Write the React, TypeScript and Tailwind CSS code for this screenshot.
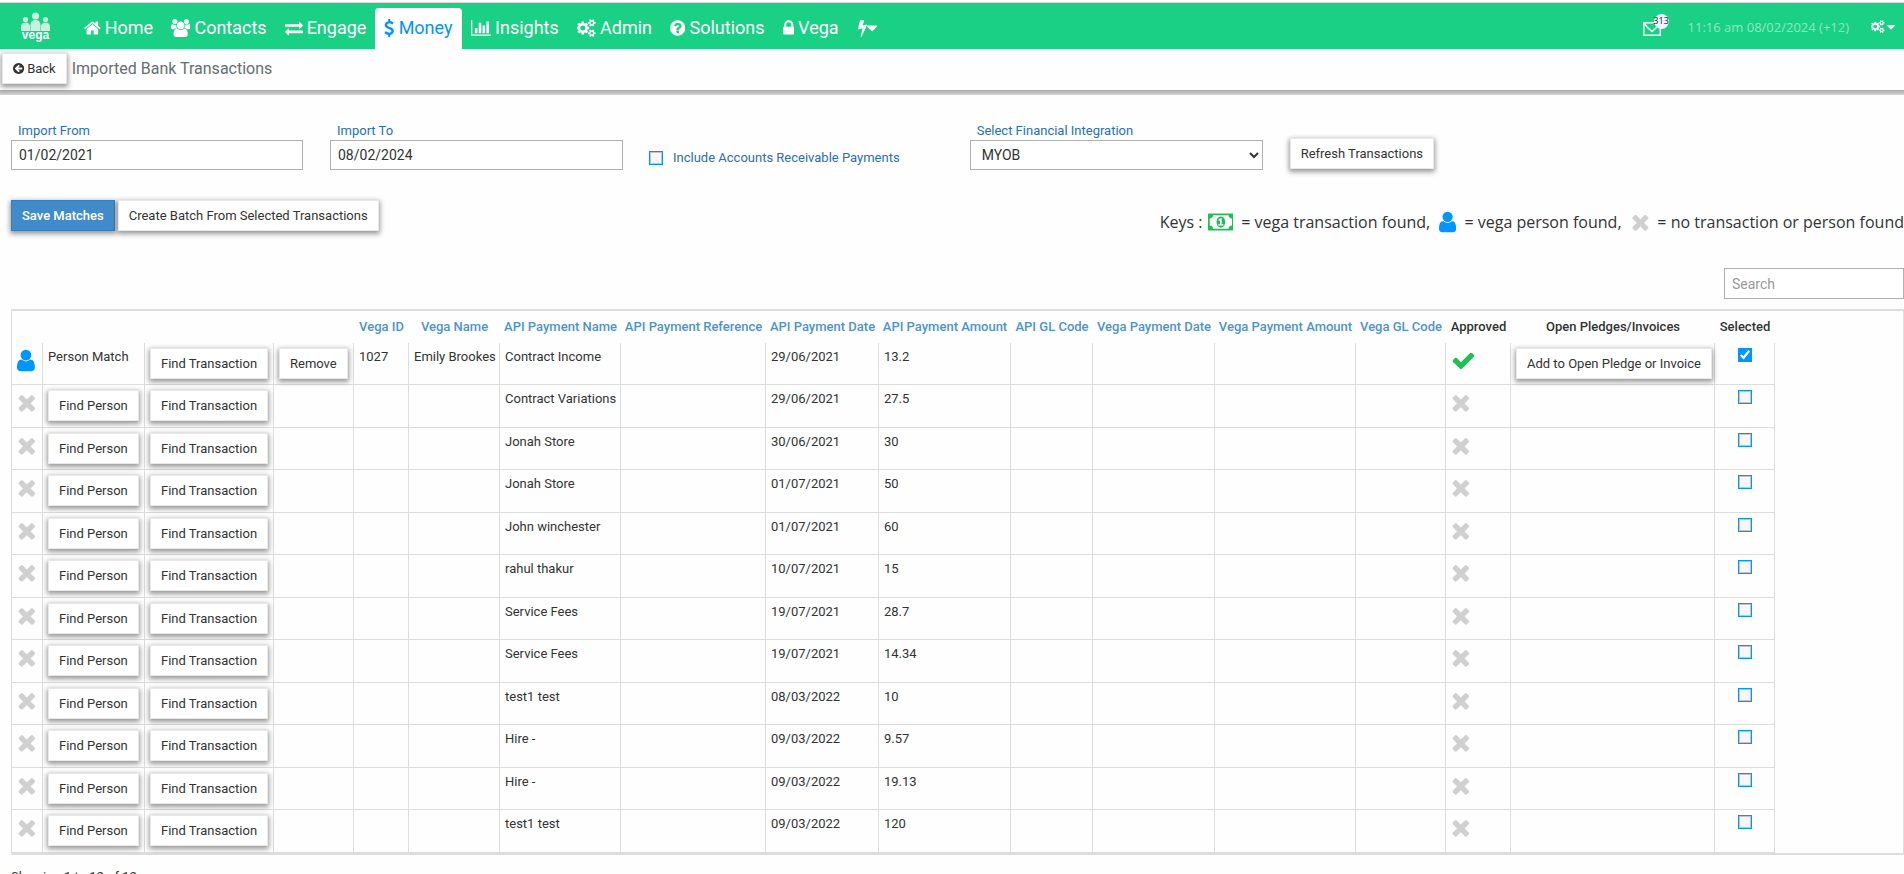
import { useState } from "react";
import type { ReactNode } from "react";

type IconDef = { box: string; d: string };

const icons: Record<string, IconDef> = {
  home: {
    box: "64 0 1664 1792",
    d: "M1472 992v480q0 26-19 45t-45 19h-384v-384h-256v384h-384q-26 0-45-19t-19-45v-480q0-1 .5-3t.5-3l575-474 575 474q1 2 1 6zm223-69l-62 74q-8 9-21 11h-3q-13 0-21-7l-692-577-692 577q-12 8-24 7-13-2-21-11l-62-74q-8-10-7-23.5t11-21.5l719-599q32-26 76-26t76 26l244 204v-195q0-14 9-23t23-9h192q14 0 23 9t9 23v408l219 182q10 8 11 21.5t-7 23.5z",
  },
  users: {
    box: "0 0 1920 1792",
    d: "M593 896q-162 5-265 128h-134q-82 0-138-40.5t-56-118.5q0-353 124-353 6 0 43.5 21t97.5 42.5 119 21.5q67 0 133-23-5 37-5 66 0 159 93 290zm1071 637q0 120-73 189.5t-194 69.5h-874q-121 0-194-69.5t-73-189.5q0-53 3.5-103.5t14-109 26.5-108.5 43-97.5 62-81 85.5-53.5 111.5-20q10 0 43 21.5t73 48 107 48 135 21.5 135-21.5 107-48 73-48 43-21.5q61 0 111.5 20t85.5 53.5 62 81 43 97.5 26.5 108.5 14 109 3.5 103.5zm-1024-1277q0 106-75 181t-181 75-181-75-75-181 75-181 181-75 181 75 75 181zm704 384q0 159-112.5 271.5t-271.5 112.5-271.5-112.5-112.5-271.5 112.5-271.5 271.5-112.5 271.5 112.5 112.5 271.5zm576 225q0 78-56 118.5t-138 40.5h-134q-103-123-265-128 93-131 93-290 0-29-5-66 66 23 133 23 59 0 119-21.5t97.5-42.5 43.5-21q124 0 124 353zm-128-609q0 106-75 181t-181 75-181-75-75-181 75-181 181-75 181 75 75 181z",
  },
  exchange: {
    box: "0 0 1792 1792",
    d: "M1792 1184v192q0 13-9.5 22.5t-22.5 9.5h-1376v192q0 13-9.5 22.5t-22.5 9.5q-12 0-24-10l-319-320q-9-9-9-22 0-14 9-23l320-320q9-9 23-9 13 0 22.5 9.5t9.5 22.5v192h1376q13 0 22.5 9.5t9.5 22.5zm0-544q0 14-9 23l-320 320q-9 9-23 9-13 0-22.5-9.5t-9.5-22.5v-192h-1376q-13 0-22.5-9.5t-9.5-22.5v-192q0-13 9.5-22.5t22.5-9.5h1376v-192q0-14 9-23t23-9q12 0 24 10l319 319q9 9 9 23z",
  },
  dollar: {
    box: "384 0 1024 1792",
    d: "M1362 1185q0 153-99.5 263.5t-258.5 136.5v175q0 14-9 23t-23 9h-135q-13 0-22.5-9.5t-9.5-22.5v-175q-66-9-127.5-31t-101.5-44.5-74-48-46.5-37.5-17.5-18q-17-21-2-41l103-135q7-10 23-12 15-2 24 9l2 2q113 99 243 125 37 8 74 8 81 0 142.5-43t61.5-122q0-28-15-53t-33.5-42-58.5-37.5-66-32-80-32.5q-39-16-61.5-25t-61.5-26.5-62.5-31-56.5-35.5-53.5-42.5-43.5-49-35.5-58-21-66.5-8.5-78q0-138 98-242t255-134v-180q0-13 9.5-22.5t22.5-9.5h135q14 0 23 9t9 23v176q57 6 110.5 23t87 33.5 63.5 37.5 39 29 15 14q17 18 5 38l-81 146q-8 15-23 16-14 3-27-7-3-3-14.5-12t-39-26.5-58.5-32-74.5-26-85.5-11.5q-95 0-155 43t-60 111q0 26 8.5 48t29.5 41.5 39.5 33 56 31 60.5 27 70 27.5q53 20 81 31.5t76 35 75.5 42.5 62 50 53 63.5 31.5 76.5 13 94z",
  },
  chart: {
    box: "0 0 2048 1792",
    d: "M640 896v512h-256v-512h256zm384-512v1024h-256v-1024h256zm1024 1152v128h-2048v-1536h128v1408h1920zm-640-896v768h-256v-768h256zm384-384v1152h-256v-1152h256z",
  },
  cogs: {
    box: "0 0 1920 1792",
    d: "M832 896q0-106-75-181t-181-75-181 75-75 181 75 181 181 75 181-75 75-181zm768 512q0-52-38-90t-90-38-90 38-38 90q0 53 37.5 90.5t90.5 37.5 90.5-37.5 37.5-90.5zm0-1024q0-52-38-90t-90-38-90 38-38 90q0 53 37.5 90.5t90.5 37.5 90.5-37.5 37.5-90.5zm-384 421v185q0 10-7 19.5t-16 10.5l-155 24q-11 35-32 76 34 48 90 115 7 11 7 20 0 12-7 19-23 30-82.5 89.5t-78.5 59.5q-11 0-21-7l-115-90q-37 19-77 31-11 108-23 155-7 24-30 24h-186q-11 0-20-7.5t-10-17.5l-23-153q-34-10-75-31l-118 89q-7 7-20 7-11 0-21-8-144-133-144-160 0-9 7-19 10-14 41-53t47-61q-23-44-35-82l-152-24q-10-1-17-9.5t-7-19.5v-185q0-10 7-19.5t16-10.5l155-24q11-35 32-76-34-48-90-115-7-11-7-20 0-12 7-20 22-30 82-89t79-59q11 0 21 7l115 90q34-18 77-32 11-108 23-154 7-24 30-24h186q11 0 20 7.5t10 17.5l23 153q34 10 75 31l118-89q8-7 20-7 11 0 21 8 144 133 144 160 0 8-7 19-12 16-42 54t-45 60q23 48 34 82l152 23q10 2 17 10.5t7 19.5zm640 533v140q0 16-149 31-12 27-30 52 51 113 51 138 0 4-4 7-122 71-124 71-8 0-46-47t-52-68q-20 2-30 2t-30-2q-14 21-52 68t-46 47q-2 0-124-71-4-3-4-7 0-25 51-138-18-25-30-52-149-15-149-31v-140q0-16 149-31 13-29 30-52-51-113-51-138 0-4 4-7 4-2 35-20t59-34 30-16q8 0 46 46.5t52 67.5q20-2 30-2t30 2q51-71 92-112l6-2q4 0 124 70 4 3 4 7 0 25-51 138 17 23 30 52 149 15 149 31zm0-1024v140q0 16-149 31-12 27-30 52 51 113 51 138 0 4-4 7-122 71-124 71-8 0-46-47t-52-68q-20 2-30 2t-30-2q-14 21-52 68t-46 47q-2 0-124-71-4-3-4-7 0-25 51-138-18-25-30-52-149-15-149-31v-140q0-16 149-31 13-29 30-52-51-113-51-138 0-4 4-7 4-2 35-20t59-34 30-16q8 0 46 46.5t52 67.5q20-2 30-2t30 2q51-71 92-112l6-2q4 0 124 70 4 3 4 7 0 25-51 138 17 23 30 52 149 15 149 31z",
  },
  question: {
    box: "128 0 1536 1792",
    d: "M1024 1376v-192q0-14-9-23t-23-9h-192q-14 0-23 9t-9 23v192q0 14 9 23t23 9h192q14 0 23-9t9-23zm256-672q0-88-55.5-163t-138.5-116-170-41q-243 0-371 213-15 24 8 42l132 100q7 6 19 6 16 0 25-12 53-68 86-92 34-24 86-24 48 0 85.5 26t37.5 59q0 38-20 61t-68 45q-63 28-115.5 86.5t-52.5 125.5v36q0 14 9 23t23 9h192q14 0 23-9t9-23q0-19 21.5-49.5t54.5-49.5q32-18 49-28.5t46-35 44.5-48 28-60.5 12.5-81zm384 192q0 209-103 385.5t-279.5 279.5-385.5 103-385.5-103-279.5-279.5-103-385.5 103-385.5 279.5-279.5 385.5-103 385.5 103 279.5 279.5 103 385.5z",
  },
  lock: {
    box: "320 0 1152 1792",
    d: "M640 768h512v-192q0-106-75-181t-181-75-181 75-75 181v192zm832 96v576q0 40-28 68t-68 28h-960q-40 0-68-28t-28-68v-576q0-40 28-68t68-28h32v-192q0-184 132-316t316-132 316 132 132 316v192h32q40 0 68 28t28 68z",
  },
  bolt: {
    box: "448 0 896 1792",
    d: "M1333 566q18 20 7 44l-540 1157q-13 25-42 25-4 0-14-2-17-5-25.5-19t-4.5-30l197-808-406 101q-4 1-12 1-18 0-31-11-18-15-13-39l201-825q4-14 16-23t28-9h328q19 0 32 12.5t13 29.5q0 8-5 18l-171 463 396-98q8-2 12-2 19 0 34 15z",
  },
  caret: {
    box: "384 0 1024 1792",
    d: "M1408 704q0 26-19 45l-448 448q-19 19-45 19t-45-19l-448-448q-19-19-19-45t19-45 45-19h896q26 0 45 19t19 45z",
  },
  back: {
    box: "128 0 1536 1792",
    d: "M1408 960v-128q0-26-19-45t-45-19h-502l189-189q19-19 19-45t-19-45l-91-91q-18-18-45-18t-45 18l-362 362-91 91q-18 18-18 45t18 45l91 91 362 362q18 18 45 18t45-18l91-91q18-18 18-45t-18-45l-189-189h502q26 0 45-19t19-45zm256-64q0 209-103 385.5t-279.5 279.5-385.5 103-385.5-103-279.5-279.5-103-385.5 103-385.5 279.5-279.5 385.5-103 385.5 103 279.5 279.5 103 385.5z",
  },
  money: {
    box: "0 0 1920 1792",
    d: "M768 1152h384v-96h-128v-448h-114l-148 137 77 80q42-37 55-57h2v288h-128v96zm512-256q0 70-21 142t-59.5 134-101.5 101-138 39-138-39-101.5-101-59.5-134-21-142 21-142 59.5-134 101.5-101 138-39 138 39 101.5 101 59.5 134 21 142zm512 256v-512q-106 0-181-75t-75-181h-1152q0 106-75 181t-181 75v512q106 0 181 75t75 181h1152q0-106 75-181t181-75zm128-832v1152q0 26-19 45t-45 19h-1792q-26 0-45-19t-19-45v-1152q0-26 19-45t45-19h1792q26 0 45 19t19 45z",
  },
  user: {
    box: "256 0 1280 1792",
    d: "M1536 1399q0 109-62.5 187t-150.5 78h-854q-88 0-150.5-78t-62.5-187q0-85 8.5-160.5t31.5-152 58.5-131 94-89 134.5-34.5q131 128 313 128t313-128q76 0 134.5 34.5t94 89 58.5 131 31.5 152 8.5 160.5zm-256-887q0 159-112.5 271.5t-271.5 112.5-271.5-112.5-112.5-271.5 112.5-271.5 271.5-112.5 271.5 112.5 112.5 271.5z",
  },
  times: {
    box: "192 0 1408 1792",
    d: "M1490 1322q0 40-28 68l-136 136q-28 28-68 28t-68-28l-294-294-294 294q-28 28-68 28t-68-28l-136-136q-28-28-28-68t28-68l294-294-294-294q-28-28-28-68t28-68l136-136q28-28 68-28t68 28l294 294 294-294q28-28 68-28t68 28l136 136q28 28 28 68t-28 68l-294 294 294 294q28 28 28 68z",
  },
  check: {
    box: "0 0 1792 1792",
    d: "M1671 566q0 40-28 68l-724 724-136 136q-28 28-68 28t-68-28l-136-136-362-362q-28-28-28-68t28-68l136-136q28-28 68-28t68 28l294 295 656-657q28-28 68-28t68 28l136 136q28 28 28 68z",
  },
};

function Icon({ name, className }: { name: string; className: string }) {
  const icon = icons[name];
  return (
    <svg viewBox={icon.box} className={`w-auto shrink-0 fill-current ${className}`} aria-hidden="true">
      <path d={icon.d} />
    </svg>
  );
}

function Logo() {
  return (
    <svg viewBox="0 0 30 32" className="h-8 w-[30px] fill-white" role="img" aria-label="vega">
      <g opacity="0.75">
        <circle cx="4.5" cy="7.5" r="2.6" />
        <circle cx="14.5" cy="4" r="3.6" />
        <circle cx="24.5" cy="7.5" r="2.6" />
        <path d="M0 19v-4q0-4.5 4.5-4.5t4.5 4.5v4z" />
        <path d="M9.5 19v-6q0-5 5-5t5 5v6z" />
        <path d="M20 19v-4q0-4.5 4.5-4.5t4.5 4.5v4z" />
      </g>
      <text x="14.5" y="27" textAnchor="middle" className="font-['Liberation_Sans'] text-[12px] font-bold">
        vega
      </text>
    </svg>
  );
}

const navItems = [
  { icon: "home", label: "Home" },
  { icon: "users", label: "Contacts" },
  { icon: "exchange", label: "Engage" },
  { icon: "dollar", label: "Money", active: true },
  { icon: "chart", label: "Insights" },
  { icon: "cogs", label: "Admin" },
  { icon: "question", label: "Solutions" },
  { icon: "lock", label: "Vega" },
];

function Button({ children, primary }: { children: ReactNode; primary?: boolean }) {
  return (
    <button
      type="button"
      className={`inline-flex h-[31px] items-center gap-[3px] border px-[10px] text-[13px] whitespace-nowrap shadow-[0_2px_5px_1px_rgba(0,0,0,0.4)] ${
        primary ? "border-[#357ebd] bg-[#428bca] font-medium text-white" : "border-[#e8e8e8] bg-white text-[#333]"
      }`}
    >
      {children}
    </button>
  );
}

const boxClass =
  "block size-[14px] appearance-none border border-[#0095ff] bg-[#f7f7f7] accent-[#0095ff] shadow-[inset_0_0_0_1px_#c4c4c4] checked:appearance-auto checked:outline checked:-outline-offset-1 checked:outline-[#0095ff]";

const columns = [
  { label: "", width: "w-[31px]" },
  { label: "", width: "w-[102px]" },
  { label: "", width: "w-[129px]" },
  { label: "", width: "w-[80px]" },
  { label: "Vega ID", width: "w-[55px]", link: true },
  { label: "Vega Name", width: "w-[91px]", link: true },
  { label: "API Payment Name", width: "w-[121px]", link: true },
  { label: "API Payment Reference", width: "w-[145px]", link: true },
  { label: "API Payment Date", width: "w-[113px]", link: true },
  { label: "API Payment Amount", width: "w-[132px]", link: true },
  { label: "API GL Code", width: "w-[82px]", link: true },
  { label: "Vega Payment Date", width: "w-[122px]", link: true },
  { label: "Vega Payment Amount", width: "w-[141px]", link: true },
  { label: "Vega GL Code", width: "w-[90px]", link: true },
  { label: "Approved", width: "w-[65px]" },
  { label: "Open Pledges/Invoices", width: "w-[204px]" },
  { label: "Selected", width: "w-[60px]" },
];

const transactions = [
  { id: "1027", person: "Emily Brookes", name: "Contract Income", date: "29/06/2021", amount: "13.2" },
  { name: "Contract Variations", date: "29/06/2021", amount: "27.5" },
  { name: "Jonah Store", date: "30/06/2021", amount: "30" },
  { name: "Jonah Store", date: "01/07/2021", amount: "50" },
  { name: "John winchester", date: "01/07/2021", amount: "60" },
  { name: "rahul thakur", date: "10/07/2021", amount: "15" },
  { name: "Service Fees", date: "19/07/2021", amount: "28.7" },
  { name: "Service Fees", date: "19/07/2021", amount: "14.34" },
  { name: "test1 test", date: "08/03/2022", amount: "10" },
  { name: "Hire -", date: "09/03/2022", amount: "9.57" },
  { name: "Hire -", date: "09/03/2022", amount: "19.13" },
  { name: "test1 test", date: "09/03/2022", amount: "120" },
];

const cell = "border-r border-b border-[#ddd] px-[5px] pt-[5px] align-top leading-[18px] whitespace-nowrap";
const labelClass = "block px-[7px] text-[13px] leading-[19px] text-[#2a6fb5]";
const fieldClass = "h-[30px] w-full border border-[#b0b0b0] bg-white text-[14px] text-[#333]";

export default function App() {
  const [selected, setSelected] = useState<number[]>([0]);

  const toggle = (i: number) =>
    setSelected((prev) => (prev.includes(i) ? prev.filter((n) => n !== i) : [...prev, i]));

  return (
    <div className="min-h-screen overflow-x-hidden bg-[#fefefe] font-[Roboto,sans-serif] text-[13px] leading-5 text-[#333]">
      <header className="mt-[2px] flex h-[47px] items-end justify-between border-t border-[#d8d8d8] bg-[#1ad085] pl-[21px] text-white">
        <div className="flex items-end">
          <a href="#" className="mr-6 mb-[5px]">
            <Logo />
          </a>
          <nav className="flex items-end">
            {navItems.map((item) => (
              <a
                key={item.label}
                href="#"
                className={`flex h-[41px] items-center gap-1 rounded-t px-[9px] pb-[2px] text-[18px] ${
                  item.active ? "bg-[#fefefe] text-[#0095ff]" : ""
                }`}
              >
                <Icon name={item.icon} className="h-[18px]" />
                {item.label}
              </a>
            ))}
            <button type="button" aria-label="Quick actions" className="flex h-[41px] items-center px-[10px] pb-[2px]">
              <Icon name="bolt" className="h-[18px]" />
              <Icon name="caret" className="h-[18px]" />
            </button>
          </nav>
        </div>
        <div className="flex h-[41px] items-center pr-[9px] pb-1">
          <a href="#" className="relative mr-[27px] block" aria-label="Messages">
            <svg viewBox="0 0 18 14" className="mt-1 h-[14px] w-[18px] fill-none stroke-white" strokeWidth="1.5">
              <rect x="0.75" y="0.75" width="16.5" height="12.5" />
              <path d="M1 1l3.5 4.5 4.5 4 4.5-4 3.5-4.5" />
            </svg>
            <span className="absolute -top-1 left-[11px] flex size-[15px] items-center justify-center rounded-full bg-[#eef4ff] font-['Open_Sans'] text-[9px] text-[#222]">
              313
            </span>
          </a>
          <span className="mr-[22px] font-['Open_Sans'] text-[13px] text-white/50">11:16 am 08/02/2024 (+12)</span>
          <button type="button" aria-label="Settings" className="flex items-center gap-[2px]">
            <Icon name="cogs" className="h-[13px]" />
            <Icon name="caret" className="h-[14px]" />
          </button>
        </div>
      </header>

      <div className="flex h-[41px] items-center gap-[5px] pb-[2px] pl-[2px]">
        <Button>
          <Icon name="back" className="h-[13px]" />
          Back
        </Button>
        <h1 className="text-[16px] text-[#666e73]">Imported Bank Transactions</h1>
      </div>
      <div className="h-[5px] bg-linear-to-b from-[#aaa] to-[#d4d4d4]" />

      <main className="pt-[26px] pl-[11px]">
        <form className="flex items-start">
          <div className="mr-[27px] w-[292px]">
            <label htmlFor="from" className={labelClass}>
              Import From
            </label>
            <input id="from" defaultValue="01/02/2021" className={`${fieldClass} px-[7px]`} />
          </div>
          <div className="mr-[26px] w-[293px]">
            <label htmlFor="to" className={labelClass}>
              Import To
            </label>
            <input id="to" defaultValue="08/02/2024" className={`${fieldClass} px-[7px]`} />
          </div>
          <label className="mt-[27px] mr-[70px] flex items-center gap-[10px] text-[13px] text-[#2a6fb5]">
            <input type="checkbox" className={boxClass} />
            Include Accounts Receivable Payments
          </label>
          <div className="mr-[27px] w-[293px]">
            <label htmlFor="integration" className={labelClass}>
              Select Financial Integration
            </label>
            <select id="integration" className={`${fieldClass} px-[7px]`}>
              <option>MYOB</option>
            </select>
          </div>
          <div className="mt-[17px]">
            <Button>Refresh Transactions</Button>
          </div>
        </form>

        <div className="mt-[30px] flex items-start justify-between">
          <div className="flex gap-[3px]">
            <Button primary>Save Matches</Button>
            <Button>Create Batch From Selected Transactions</Button>
          </div>
          <p className="mt-[10px] flex items-center font-['Open_Sans'] text-[16px]">
            Keys :
            <Icon name="money" className="mr-2 ml-[5px] h-6 text-[#1fbf54]" />
            = vega transaction found,
            <Icon name="user" className="mr-2 ml-[9px] h-6 text-[#0095ff]" />
            = vega person found,
            <Icon name="times" className="mr-2 ml-[9px] h-6 text-[#d0d0d0]" />
            = no transaction or person found
          </p>
        </div>

        <div className="mt-[34px] flex justify-end">
          <input
            type="search"
            aria-label="Search"
            placeholder="Search"
            className="h-[31px] w-[180px] border border-[#b0b0b0] bg-white px-[7px] text-[14px] placeholder:text-[#999]"
          />
        </div>

        <div className="mt-[10px] border-t-2 border-r border-b-2 border-l border-[#ddd]">
          <table className="w-[1763px] table-fixed border-separate border-spacing-0">
            <thead>
              <tr className="h-8">
                {columns.map((col, i) => (
                  <th
                    key={i}
                    className={`${col.width} text-center text-[13px] font-medium whitespace-nowrap ${
                      col.link ? "text-[#4f93ce]" : "text-[#333]"
                    }`}
                  >
                    {col.link ? <a href="#">{col.label}</a> : col.label}
                  </th>
                ))}
              </tr>
            </thead>
            <tbody>
              {transactions.map((row, i) => (
                <tr key={i} className="h-[42px] even:h-[43px]">
                  <td className={cell}>
                    {row.person ? (
                      <Icon name="user" className="h-[25px] text-[#0095ff]" />
                    ) : (
                      <Icon name="times" className="h-[25px] text-[#d0d0d0]" />
                    )}
                  </td>
                  <td className={cell}>{row.person ? "Person Match" : <Button>Find Person</Button>}</td>
                  <td className={cell}>
                    <Button>Find Transaction</Button>
                  </td>
                  <td className={cell}>{row.person && <Button>Remove</Button>}</td>
                  <td className={cell}>{row.id}</td>
                  <td className={cell}>{row.person}</td>
                  <td className={cell}>{row.name}</td>
                  <td className={cell}></td>
                  <td className={cell}>{row.date}</td>
                  <td className={cell}>{row.amount}</td>
                  <td className={cell}></td>
                  <td className={cell}></td>
                  <td className={cell}></td>
                  <td className={cell}></td>
                  <td className={cell}>
                    {row.person ? (
                      <Icon name="check" className="h-[25px] text-[#1fbf54]" />
                    ) : (
                      <Icon name="times" className="h-[25px] text-[#d0d0d0]" />
                    )}
                  </td>
                  <td className={cell}>{row.person && <Button>Add to Open Pledge or Invoice</Button>}</td>
                  <td className={cell}>
                    <input
                      type="checkbox"
                      aria-label={`Select ${row.name}`}
                      checked={selected.includes(i)}
                      onChange={() => toggle(i)}
                      className={`${boxClass} mx-auto`}
                    />
                  </td>
                </tr>
              ))}
            </tbody>
          </table>
        </div>
        <p className="mt-3">Showing 1 to 12 of 12</p>
      </main>
    </div>
  );
}
